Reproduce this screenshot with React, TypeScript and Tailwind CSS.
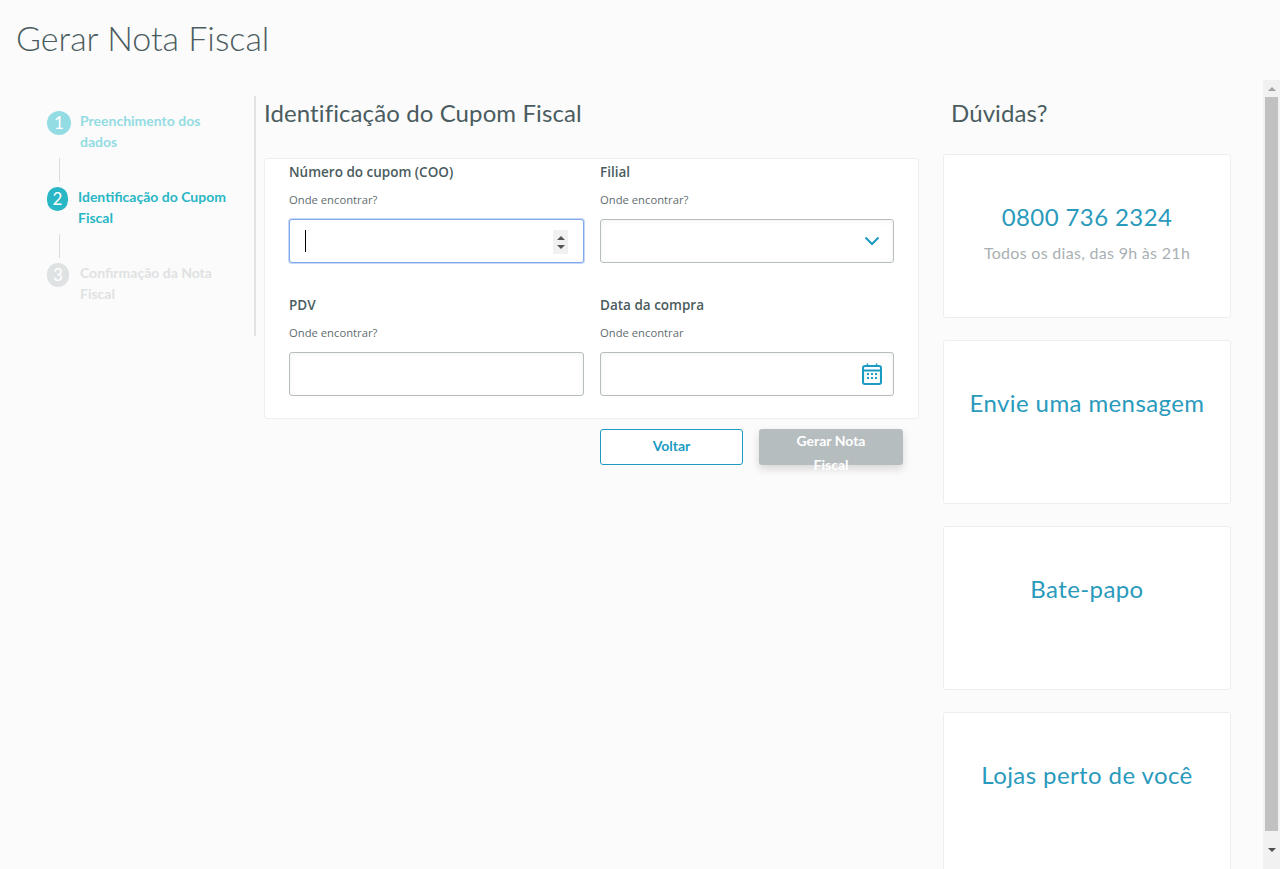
import React from "react";

const sans = "font-['Lato','Open_Sans',sans-serif]";

const steps = [
    { n: "1", lines: ["Preenchimento dos", "dados"], circle: "bg-[#93dce3] w-6", text: "text-[#93dce3] ml-[9px]" },
    { n: "2", lines: ["Identificação do Cupom", "Fiscal"], circle: "bg-[#29b6c5] w-[21px]", text: "text-[#29b6c5] ml-[10px]" },
    { n: "3", lines: ["Confirmação da Nota", "Fiscal"], circle: "bg-[#dfe2e3] w-[22px]", text: "text-[#dfe2e3] ml-[11px]" },
];

const Field: React.FC<{ label: string; hint: string; children: React.ReactNode }> = ({ label, hint, children }) => (
    <div className="h-[133px]">
        <div className="h-5 text-[13.5px] leading-5 font-semibold text-[#4a5c60] font-['Open_Sans',sans-serif]">{label}</div>
        <div className="mt-2 h-5 text-[11.25px] leading-5 text-[#5f6d70] font-['Open_Sans',sans-serif]">{hint}</div>
        <div className="mt-[9px]">{children}</div>
    </div>
);

const boxClass = "relative flex h-[44px] items-center rounded-[3px] border bg-white";

const Card: React.FC<{ title: string; sub?: string }> = ({ title, sub }) => (
    <div className="h-[164px] w-[288px] shrink-0 rounded-[3px] border border-[#eeeeee] bg-white pt-[45px] text-center">
        <div className="text-[24px] leading-[34px] tracking-[0.4px] text-[#2a9abc]">{title}</div>
        {sub && <div className="mt-[8px] text-[16px] leading-[22px] tracking-[0.3px] text-[#a9b0b2]">{sub}</div>}
    </div>
);

export default function App() {
    return (
        <div className={`flex h-[869px] flex-col overflow-hidden bg-[#fbfbfb] ${sans}`}>
            <div className="h-[80px] shrink-0 pl-4 pt-4 text-[34px] leading-[44px] font-light text-[#4a5c60]">Gerar Nota Fiscal</div>
            <div className="flex min-h-0 flex-1">
                <div className="flex min-w-0 flex-1 overflow-hidden pt-4">
                    <div className="h-[240px] w-[256px] shrink-0 border-r-2 border-[#e2e4e5] pl-[47px] pt-[15px]">
                        {steps.map((s, i) => (
                            <div key={s.n}>
                                {i > 0 && <div className="mb-[5px] ml-3 mt-[1px] h-[24px] w-px bg-[#d8dcdd]" />}
                                <div className="flex h-[46px] items-start">
                                    <div className={`flex h-6 shrink-0 items-center justify-center rounded-full text-[17px] font-normal text-white ${s.circle}`}>{s.n}</div>
                                    <div className={`${s.text} -mt-px whitespace-nowrap text-[14px] leading-[21px] font-bold`}>
                                        {s.lines.map((l) => <div key={l}>{l}</div>)}
                                    </div>
                                </div>
                            </div>
                        ))}
                    </div>
                    <div className="ml-2 w-[655px] shrink-0">
                        <h1 className="h-[62px] text-[24px] leading-[34px] tracking-[0.1px] text-[#4a5c60]">Identificação do Cupom Fiscal</h1>
                        <div className="h-[261px] rounded-[3px] border border-[#eeeeee] bg-white pl-6 pt-[3px]">
                            <div className="grid grid-cols-[295px_294px] gap-x-4">
                                <Field label="Número do cupom (COO)" hint="Onde encontrar?">
                                    <div className={`${boxClass} border-[#7fa8ee] shadow-[0_0_0_1px_rgba(127,168,238,0.45)]`}>
                                        <div className="ml-[15px] h-[22px] w-px bg-black" />
                                        <div className="absolute right-[15px] top-[10px] flex h-[24px] w-[15px] flex-col items-center justify-center gap-[5px] bg-[#f1f1f1]">
                                            <div className="h-0 w-0 border-x-[4px] border-b-[4px] border-x-transparent border-b-[#555555]" />
                                            <div className="h-0 w-0 border-x-[4px] border-t-[4px] border-x-transparent border-t-[#555555]" />
                                        </div>
                                    </div>
                                </Field>
                                <Field label="Filial" hint="Onde encontrar?">
                                    <div className={`${boxClass} justify-end border-[#b6bdbf] pr-[13px] shadow-[inset_0_1px_6px_rgba(0,0,0,0.05)]`}>
                                        <svg width="16" height="10" viewBox="0 0 16 10" fill="none" stroke="#1b9bc2" strokeWidth="2">
                                            <path d="M1.5 1.5 8 8l6.5-6.5" />
                                        </svg>
                                    </div>
                                </Field>
                                <Field label="PDV" hint="Onde encontrar?">
                                    <div className={`${boxClass} border-[#b6bdbf] shadow-[inset_0_1px_6px_rgba(0,0,0,0.05)]`} />
                                </Field>
                                <Field label="Data da compra" hint="Onde encontrar">
                                    <div className={`${boxClass} justify-end border-[#b6bdbf] pr-[11px] shadow-[inset_0_1px_6px_rgba(0,0,0,0.05)]`}>
                                        <svg width="20" height="22" viewBox="0 0 20 22" fill="none" stroke="#1b9bc2">
                                            <rect x="1" y="3" width="18" height="18" rx="2" strokeWidth="2" />
                                            <path d="M1 7.5h18" strokeWidth="2" />
                                            <path d="M5.5 0.5v3M14.5 0.5v3" strokeWidth="1.5" />
                                            <path d="M5 11h2M9 11h2M13 11h2M5 15h2M9 15h2M13 15h2" strokeWidth="2" />
                                        </svg>
                                    </div>
                                </Field>
                            </div>
                        </div>
                        <div className="mt-[10px] flex pl-[336px]">
                            <button className="h-9 w-[143px] rounded-[3px] border border-[#1b9bc2] bg-white pb-1 text-[14px] font-bold text-[#1b9bc2]">Voltar</button>
                            <button className="relative ml-4 h-9 w-[144px] rounded-[3px] bg-[#b6bdbf] text-[14px] font-bold shadow-[0_4px_8px_rgba(0,0,0,0.15)]">
                                <div className="absolute inset-x-0 top-0 flex flex-col text-center leading-6 text-white">
                                    <span>Gerar Nota</span>
                                    <span>Fiscal</span>
                                </div>
                            </button>
                        </div>
                    </div>
                    <div className="ml-6 flex w-[288px] shrink-0 flex-col">
                        <h2 className="h-[58px] shrink-0 pl-2 text-[24px] leading-[34px] tracking-[0.1px] text-[#4a5c60]">Dúvidas?</h2>
                        <div className="flex flex-col gap-[22px]">
                            <Card title="0800 736 2324" sub="Todos os dias, das 9h às 21h" />
                            <Card title="Envie uma mensagem" />
                            <Card title="Bate-papo" />
                            <Card title="Lojas perto de você" />
                        </div>
                    </div>
                </div>
                <div className="flex w-[17px] shrink-0 flex-col bg-[#f1f1f1]">
                    <div className="flex h-[17px] items-center justify-center">
                        <div className="h-0 w-0 border-x-[4px] border-b-[4px] border-x-transparent border-b-[#a3a3a3]" />
                    </div>
                    <div className="mx-[2px] h-[734px] bg-[#c1c1c1]" />
                    <div className="flex flex-1 items-center justify-center">
                        <div className="h-0 w-0 border-x-[4px] border-t-[4px] border-x-transparent border-t-[#505050]" />
                    </div>
                </div>
            </div>
        </div>
    );
}
